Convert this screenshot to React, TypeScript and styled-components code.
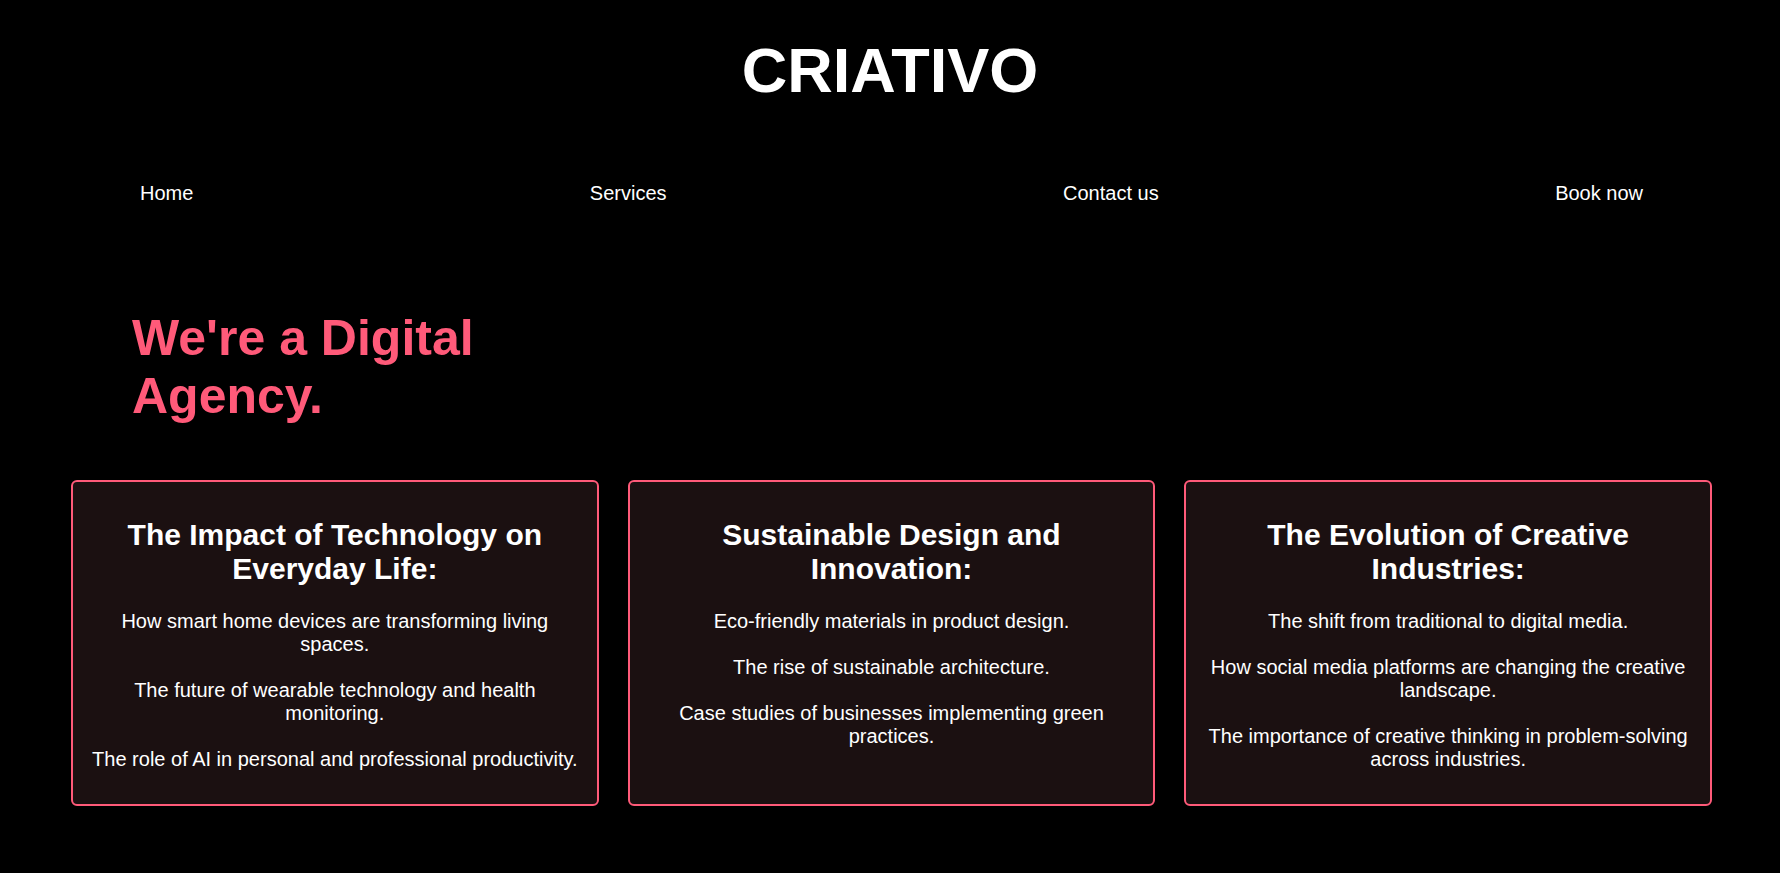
import React from 'react'
import styled, {createGlobalStyle} from 'styled-components'

const pink = '#ff5a79'

const GlobalStyle = createGlobalStyle`
  body {
    margin: 0;
    background: #000;
    color: #fff;
    font-family: "Liberation Sans", Arial, sans-serif;
  }
`

const Header = styled.header`
  display: flex;
  flex-direction: column;
`

const Logo = styled.h1`
  margin: 35px 0 0;
  text-align: center;
  font-size: 63px;
  font-weight: 700;
  line-height: 71px;
`

const Nav = styled.nav`
  display: flex;
  justify-content: space-between;
  padding: 0 137px 0 140px;
  margin-top: 76px;
`

const NavLink = styled.a`
  color: #fff;
  text-decoration: none;
  font-size: 20px;
  line-height: 23px;
  cursor: pointer;
`

const Hero = styled.section`
  padding: 0 0 0 132px;
  margin-top: 104px;
`

const HeroTitle = styled.h2`
  margin: 0;
  width: 440px;
  color: ${pink};
  font-size: 50px;
  font-weight: 700;
  line-height: normal;
`

const Cards = styled.section`
  display: grid;
  grid-template-columns: repeat(3, 1fr);
  gap: 29px;
  padding: 0 68px 0 71px;
  margin-top: 55px;
`

const Card = styled.article`
  background: #1b1011;
  border: 2px solid ${pink};
  border-radius: 6px;
  padding: 10px 16px;
  text-align: center;
`

const CardTitle = styled.h3`
  margin: 26px 0 24px;
  font-size: 30px;
  font-weight: 700;
  line-height: normal;
`

const CardText = styled.p`
  margin: 23px 0;
  font-size: 20px;
  line-height: 23px;
`

const links = ['Home', 'Services', 'Contact us', 'Book now']

const topics = [
    {
        title: 'The Impact of Technology on Everyday Life:',
        points: [
            'How smart home devices are transforming living spaces.',
            'The future of wearable technology and health monitoring.',
            'The role of AI in personal and professional productivity.',
        ],
    },
    {
        title: 'Sustainable Design and Innovation:',
        points: [
            'Eco-friendly materials in product design.',
            'The rise of sustainable architecture.',
            'Case studies of businesses implementing green practices.',
        ],
    },
    {
        title: 'The Evolution of Creative Industries:',
        points: [
            'The shift from traditional to digital media.',
            'How social media platforms are changing the creative landscape.',
            'The importance of creative thinking in problem-solving across industries.',
        ],
    },
]

function App() {
    return (
        <>
            <GlobalStyle/>
            <Header>
                <Logo>CRIATIVO</Logo>
                <Nav>
                    {links.map((l) => <NavLink key={l}>{l}</NavLink>)}
                </Nav>
            </Header>
            <Hero>
                <HeroTitle>We're a Digital Agency.</HeroTitle>
            </Hero>
            <Cards>
                {topics.map((t) => (
                    <Card key={t.title}>
                        <CardTitle>{t.title}</CardTitle>
                        {t.points.map((p) => <CardText key={p}>{p}</CardText>)}
                    </Card>
                ))}
            </Cards>
        </>
    )
}

export default App
